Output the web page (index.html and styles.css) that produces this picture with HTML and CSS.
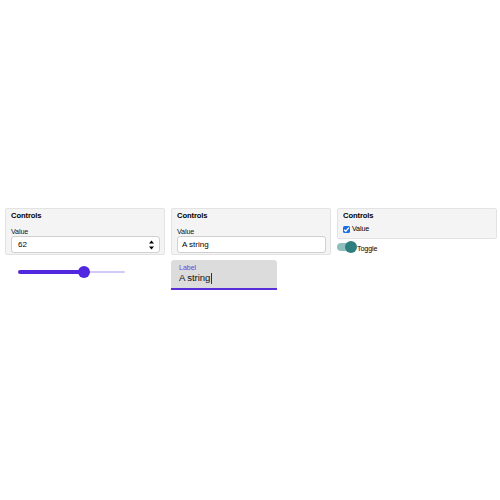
FILE: index.html
```html
<!DOCTYPE html>
<html>
<head>
<meta charset="utf-8">
<link rel="stylesheet" href="styles.css">
</head>
<body>
<div class="page">
  <div class="grid">
    <div class="col">
      <div class="panel">
        <div class="title">Controls</div>
        <div class="label">Value</div>
        <div class="input number">
          <span>62</span>
          <span class="spin">
            <svg width="7" height="12" viewBox="0 0 7 12"><path d="M3.5 1.5 L6 4.5 H1 Z M3.5 10.5 L6 7.5 H1 Z" fill="#000"/></svg>
          </span>
        </div>
      </div>
      <div class="slider">
        <div class="track-on" style="width:66px"></div>
        <div class="thumb"></div>
        <div class="track-off"></div>
      </div>
    </div>
    <div class="col">
      <div class="panel">
        <div class="title">Controls</div>
        <div class="label">Value</div>
        <div class="input text"><span>A string</span></div>
      </div>
      <div class="filled">
        <div class="flabel">Label</div>
        <div class="fvalue">A string<span class="caret"></span></div>
      </div>
    </div>
    <div class="col">
      <div class="panel short">
        <div class="title">Controls</div>
        <label class="check"><span class="box"><svg width="7" height="7" viewBox="0 0 8 8"><path d="M1.3 4.2 L3.2 6 L6.8 1.8" fill="none" stroke="#fff" stroke-width="1.5"/></svg></span>Value</label>
      </div>
      <div class="toggle">
        <div class="ttrack"><div class="tthumb"></div></div>
        <span class="tlabel">Toggle</span>
      </div>
    </div>
  </div>
</div>
</body>
</html>
```
FILE: styles.css
```css
html, body {
  margin: 0;
  padding: 0;
  background: #fff;
}
body {
  font-family: "Liberation Sans", Arial, sans-serif;
  color: #000;
}
.page {
  padding: 208px 3px 0 5px;
}
.grid {
  display: grid;
  grid-template-columns: 1fr 1fr 1fr;
  column-gap: 6px;
}
.col {
  display: flex;
  flex-direction: column;
  align-items: flex-start;
}
.panel {
  align-self: stretch;
  background: #f4f4f4;
  border: 1px solid #e3e3e3;
  border-radius: 2px;
  padding: 2px 4px 1px 5px;
  height: 47px;
  box-sizing: border-box;
}
.panel.short {
  height: 31px;
}
.title {
  font-size: 7.6px;
  font-weight: bold;
  line-height: 10px;
  letter-spacing: -0.1px;
}
.label {
  font-size: 7.2px;
  line-height: 10px;
  margin-top: 5px;
  margin-bottom: 0;
  padding-top: 1px;
  height: 9px;
  box-sizing: border-box;
  color: #111;
  letter-spacing: -0.15px;
}
.input {
  margin-top: 1px;
  height: 17px;
  box-sizing: border-box;
  border: 1px solid #d0d0d0;
  border-radius: 3px;
  background: #fff;
  display: flex;
  align-items: center;
  justify-content: space-between;
  font-size: 8px;
  padding: 0 4px 0 6px;
}
.input.text {
  padding-left: 4px;
}
.spin {
  display: flex;
  align-items: center;
}
.slider {
  display: flex;
  align-items: center;
  height: 14px;
  margin-top: 10px;
  margin-left: 13px;
}
.track-on {
  height: 4px;
  background: #5227e0;
  border-radius: 2px 0 0 2px;
}
.thumb {
  width: 12px;
  height: 12px;
  border-radius: 50%;
  background: #5227e0;
  margin-left: -6px;
  margin-right: -6px;
  position: relative;
  z-index: 1;
}
.track-off {
  width: 41px;
  height: 2px;
  background: #d3c8f8;
  border-radius: 0 1px 1px 0;
}
.filled {
  margin-top: 5px;
  width: 106px;
  height: 30px;
  box-sizing: border-box;
  background: #dcdcdc;
  border-radius: 3px 3px 0 0;
  border-bottom: 2px solid #5a2fd8;
  padding: 4px 0 0 8px;
}
.flabel {
  font-size: 7px;
  line-height: 8px;
  color: #6b40e0;
}
.fvalue {
  font-size: 9.6px;
  line-height: 12px;
  color: #111;
  display: flex;
  align-items: center;
  letter-spacing: -0.1px;
}
.caret {
  display: inline-block;
  width: 1px;
  height: 11px;
  background: #333;
  margin-left: 0.5px;
}
.check {
  display: flex;
  align-items: center;
  font-size: 7.2px;
  line-height: 10px;
  margin-top: 3px;
  letter-spacing: -0.15px;
}
.box {
  width: 7px;
  height: 7px;
  background: #1a6fe6;
  border-radius: 1.5px;
  display: flex;
  align-items: center;
  justify-content: center;
  margin-right: 2px;
}
.toggle {
  display: flex;
  align-items: center;
  height: 14px;
  margin-top: 1px;
}
.ttrack {
  position: relative;
  width: 18px;
  height: 8px;
  background: #8fbfbc;
  border-radius: 4px;
}
.tthumb {
  position: absolute;
  left: 8px;
  top: -2px;
  width: 12px;
  height: 12px;
  border-radius: 50%;
  background: #2f7f7e;
}
.tlabel {
  font-size: 7.2px;
  letter-spacing: -0.15px;
  margin-left: 2px;
  margin-top: 3px;
}
```
